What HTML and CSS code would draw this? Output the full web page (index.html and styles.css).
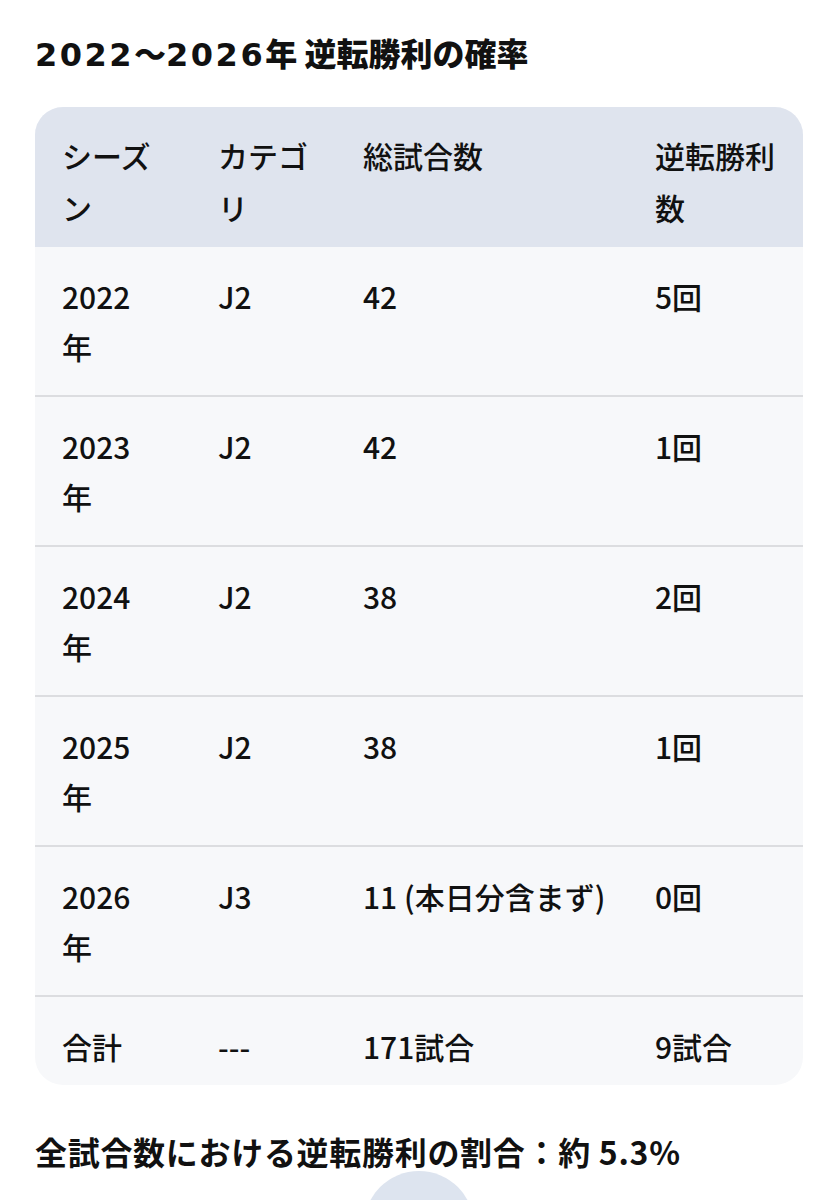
FILE: index.html
```html
<!DOCTYPE html>
<html lang="ja">
<head>
<meta charset="utf-8">
<title>2022～2026年 逆転勝利の確率</title>
<link rel="stylesheet" href="styles.css">
</head>
<body>
<main class="page">
  <h1 class="title"><span class="num">2022</span>～<span class="num">2026</span>年 逆転勝利の確率</h1>
  <div class="table-wrap">
    <table class="stats">
      <colgroup>
        <col class="c1"><col class="c2"><col class="c3"><col class="c4">
      </colgroup>
      <thead>
        <tr>
          <th class="k1">シーズン</th>
          <th class="k2">カテゴリ</th>
          <th>総試合数</th>
          <th>逆転勝利数</th>
        </tr>
      </thead>
      <tbody>
        <tr><td class="k1">2022年</td><td class="k2">J2</td><td>42</td><td>5回</td></tr>
        <tr><td class="k1">2023年</td><td class="k2">J2</td><td>42</td><td>1回</td></tr>
        <tr><td class="k1">2024年</td><td class="k2">J2</td><td>38</td><td>2回</td></tr>
        <tr><td class="k1">2025年</td><td class="k2">J2</td><td>38</td><td>1回</td></tr>
        <tr><td class="k1">2026年</td><td class="k2">J3</td><td>11 (本日分含まず)</td><td>0回</td></tr>
        <tr class="total"><td class="k1">合計</td><td class="k2">---</td><td>171試合</td><td>9試合</td></tr>
      </tbody>
    </table>
  </div>
  <p class="summary">全試合数における逆転勝利の割合：約 5.3%</p>
  <div class="bubble"></div>
</main>
</body>
</html>
```

FILE: styles.css
```css
html, body {
  margin: 0;
  padding: 0;
  background: #ffffff;
}

body {
  font-family: "Noto Sans CJK JP", "Noto Sans", sans-serif;
  color: #111111;
  overflow: hidden;
  height: 1200px;
}

.page {
  padding: 0 35px;
}

.title {
  margin: 0;
  padding-top: 32px;
  height: 40px;
  font-size: 32px;
  line-height: 40px;
  font-weight: 900;
  white-space: nowrap;
}

.title .num {
  font-family: "DejaVu Sans", "Noto Sans CJK JP", sans-serif;
  font-weight: 700;
  line-height: 1;
  letter-spacing: 2.5px;
}

.table-wrap {
  margin-top: 35px;
  border-radius: 28px;
  overflow: hidden;
  background: #f7f8fa;
}

.stats {
  width: 100%;
  border-collapse: collapse;
  table-layout: fixed;
  font-size: 30px;
  font-weight: 500;
}

.c1 { width: 156px; }
.c2 { width: 145px; }
.c3 { width: 292px; }
.c4 { width: 175px; }

.stats th,
.stats td {
  text-align: left;
  vertical-align: top;
  padding: 24px 20px 24px 27px;
  line-height: 50px;
}

.stats th {
  background: #dfe4ee;
  font-weight: 500;
  padding-top: 22px;
  padding-bottom: 14px;
  line-height: 52px;
}

.stats .k1 { padding-right: 37px; }
.stats .k2 { padding-right: 28px; }

.stats tbody tr + tr td {
  border-top: 2px solid #dcdde0;
}

.stats tr.total td {
  padding-bottom: 14px;
}

.summary {
  margin: 46px 0 0;
  font-size: 32px;
  line-height: 40px;
  font-weight: 700;
  letter-spacing: 0.7px;
}

.bubble {
  width: 110px;
  height: 110px;
  border-radius: 50%;
  background: #dde4ef;
  margin: 0 auto;
}
```
